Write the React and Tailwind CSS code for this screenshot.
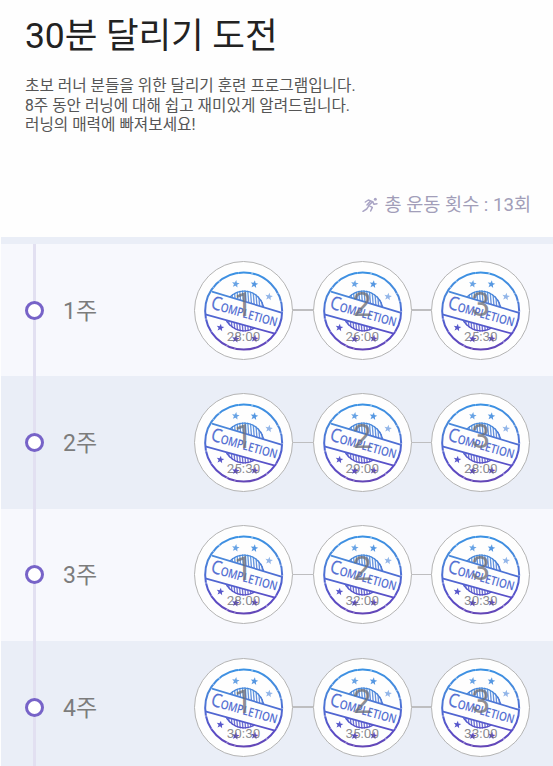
import React from "react";

const KR = "font-[Roboto,'Noto_Sans_CJK_KR',sans-serif]";

const weeks = [
  { label: "1주", times: ["28:00", "26:00", "25:30"], bg: "bg-[#f7f8fd]" },
  { label: "2주", times: ["25:30", "29:00", "28:00"], bg: "bg-[#eaeef7]" },
  { label: "3주", times: ["28:00", "32:00", "30:30"], bg: "bg-[#f7f8fd]" },
  { label: "4주", times: ["30:30", "35:00", "33:00"], bg: "bg-[#eaeef7]" },
];

const stars = [
  [125, 69, 12, 0.8],
  [181, 70, 12, 0.9],
  [225, 107, 12, 0.6],
  [79, 200, 12, 1],
  [125, 234, 12, 1],
  [182, 233, 12, 1],
];

function starPoints(cx, cy, r) {
  return Array.from({ length: 10 }, (_, i) => {
    const a = -Math.PI / 2 + 0.15 + (i * Math.PI) / 5;
    const d = i % 2 ? r * 0.43 : r;
    return `${(cx + d * Math.cos(a)).toFixed(1)},${(cy + d * Math.sin(a)).toFixed(1)}`;
  }).join(" ");
}

const hatch = Array.from({ length: 17 }, (_, i) => 86 + i * 8);

function StampDefs() {
  return (
    <svg className="absolute size-0" aria-hidden="true">
      <defs>
        <linearGradient id="ink" gradientUnits="userSpaceOnUse" x1="0" y1="32" x2="0" y2="268">
          <stop offset="0" stopColor="#3a92e4" />
          <stop offset="0.3" stopColor="#4a87da" />
          <stop offset="0.55" stopColor="#4f68d2" />
          <stop offset="0.8" stopColor="#5a4cc6" />
          <stop offset="1" stopColor="#6446b6" />
        </linearGradient>
        <clipPath id="disc">
          <circle cx="150" cy="150" r="62" />
        </clipPath>
        <clipPath id="outside">
          <path d="M0 0H300V167L262 155L54 92L0 76ZM0 143L34 160L240 217L300 234V300H0Z" />
        </clipPath>
      </defs>
    </svg>
  );
}

function Stamp() {
  return (
    <svg viewBox="0 0 300 300" className="absolute -inset-px size-[100px]">
      <g fill="none" stroke="url(#ink)">
        <circle cx="149" cy="150" r="115.500" strokeWidth="6" />
        <circle cx="149" cy="150" r="116" stroke="#fff" strokeOpacity="0.4" strokeWidth="6" strokeDasharray="4 61 2 38 5 97 3 22" />
        <g clipPath="url(#outside)">
          <g clipPath="url(#disc)">
            <circle cx="150" cy="150" r="60" strokeWidth="5" />
            {hatch.map((x) => (
              <path key={x} d={`M${x - 5} 85L${x + 5} 215`} strokeWidth="4" strokeOpacity="0.85" />
            ))}
          </g>
        </g>
        <path d="M54 92L262 155M34 160L240 217" strokeWidth="5" />
      </g>
      <g fill="url(#ink)">
        {stars.map(([x, y, r, o]) => (
          <polygon key={`${x}-${y}`} points={starPoints(x, y, r)} opacity={o} />
        ))}
      </g>
      <g transform="translate(48 142) rotate(15.5)" fill="#5570d2" className="font-['Open_Sans',sans-serif]">
        <text x="0" y="0" fontSize="56" fontWeight="400" textLength="31" lengthAdjust="spacingAndGlyphs" stroke="#5570d2" strokeWidth="0.600">C</text>
        <text x="30" y="0" fontSize="37" fontWeight="600" textLength="176" lengthAdjust="spacingAndGlyphs">OMPLETION</text>
      </g>
    </svg>
  );
}

function Session({ number, time }) {
  return (
    <div className="relative flex size-[99px] shrink-0 flex-col items-center rounded-full border border-[#b4b4b4] bg-[#fefefe] font-[Roboto,sans-serif]">
      <Stamp />
      <span className="relative mt-[25px] text-[34px] leading-[34px] text-[#6e7078]/80">{number}</span>
      <span className="relative mt-[8px] text-[13.500px] leading-[14px] text-[#6e6e74]/80">{time}</span>
    </div>
  );
}

function Week({ week }) {
  return (
    <section className={`flex h-[132.300px] shrink-0 items-center ${week.bg}`}>
      <div className="relative ml-[24px] flex h-full w-[19px] items-center justify-center">
        <div className="absolute inset-y-0 left-[8px] w-[3px] bg-[#e2e0f1]" />
        <div className="relative size-[19px] rounded-full border-[3.500px] border-[#7763c8] bg-white" />
      </div>
      <h2 className={`ml-[19px] w-[131px] pt-[3px] text-[23px] leading-8 text-[#7c7c7c] ${KR}`}>{week.label}</h2>
      <div className="flex items-center">
        {week.times.map((time, i) => (
          <React.Fragment key={i}>
            {i > 0 && <div className="h-[1.500px] w-[19.700px] bg-[#bebec0]" />}
            <Session number={i + 1} time={time} />
          </React.Fragment>
        ))}
      </div>
    </section>
  );
}

function Runner() {
  return (
    <svg viewBox="0 0 48 48" className="h-4 w-4" fill="none" stroke="#aaa5c5" strokeWidth="4.500" strokeLinecap="round" strokeLinejoin="round">
      <circle cx="40" cy="7" r="4.500" fill="#aaa5c5" stroke="none" />
      <path d="M10 15L19 9L32 14L20 25L31 31L26 42" />
      <path d="M32 14L36 22L45 20" />
      <path d="M19 29L14 36L3 43M25 13L15 24" />
    </svg>
  );
}

export default function App() {
  return (
    <main className={`flex h-[766px] w-[553px] flex-col overflow-hidden bg-[#fefefe] pl-px ${KR}`}>
      <StampDefs />
      <header className="flex h-[237px] shrink-0 flex-col pl-[24px] pr-[22px]">
        <h1 className="mt-[12px] whitespace-nowrap text-[35.500px] leading-[48px] tracking-[-0.1px] text-[#222]">30분 달리기 도전</h1>
        <p className="mt-[16px] whitespace-nowrap text-[15.700px] leading-[19.700px] text-[#555]">
          초보 러너 분들을 위한 달리기 훈련 프로그램입니다.
          <br />
          8주 동안 러닝에 대해 쉽고 재미있게 알려드립니다.
          <br />
          러닝의 매력에 빠져보세요!
        </p>
        <div className="mt-[56px] flex items-center justify-end gap-[7px] text-[18.600px] leading-[28px] text-[#a29eb9]">
          <Runner />
          <span className="whitespace-nowrap">총 운동 횟수 : 13회</span>
        </div>
      </header>
      <div className="h-[7px] shrink-0 bg-[#eaeef7]" />
      {weeks.map((week) => (
        <Week key={week.label} week={week} />
      ))}
    </main>
  );
}
